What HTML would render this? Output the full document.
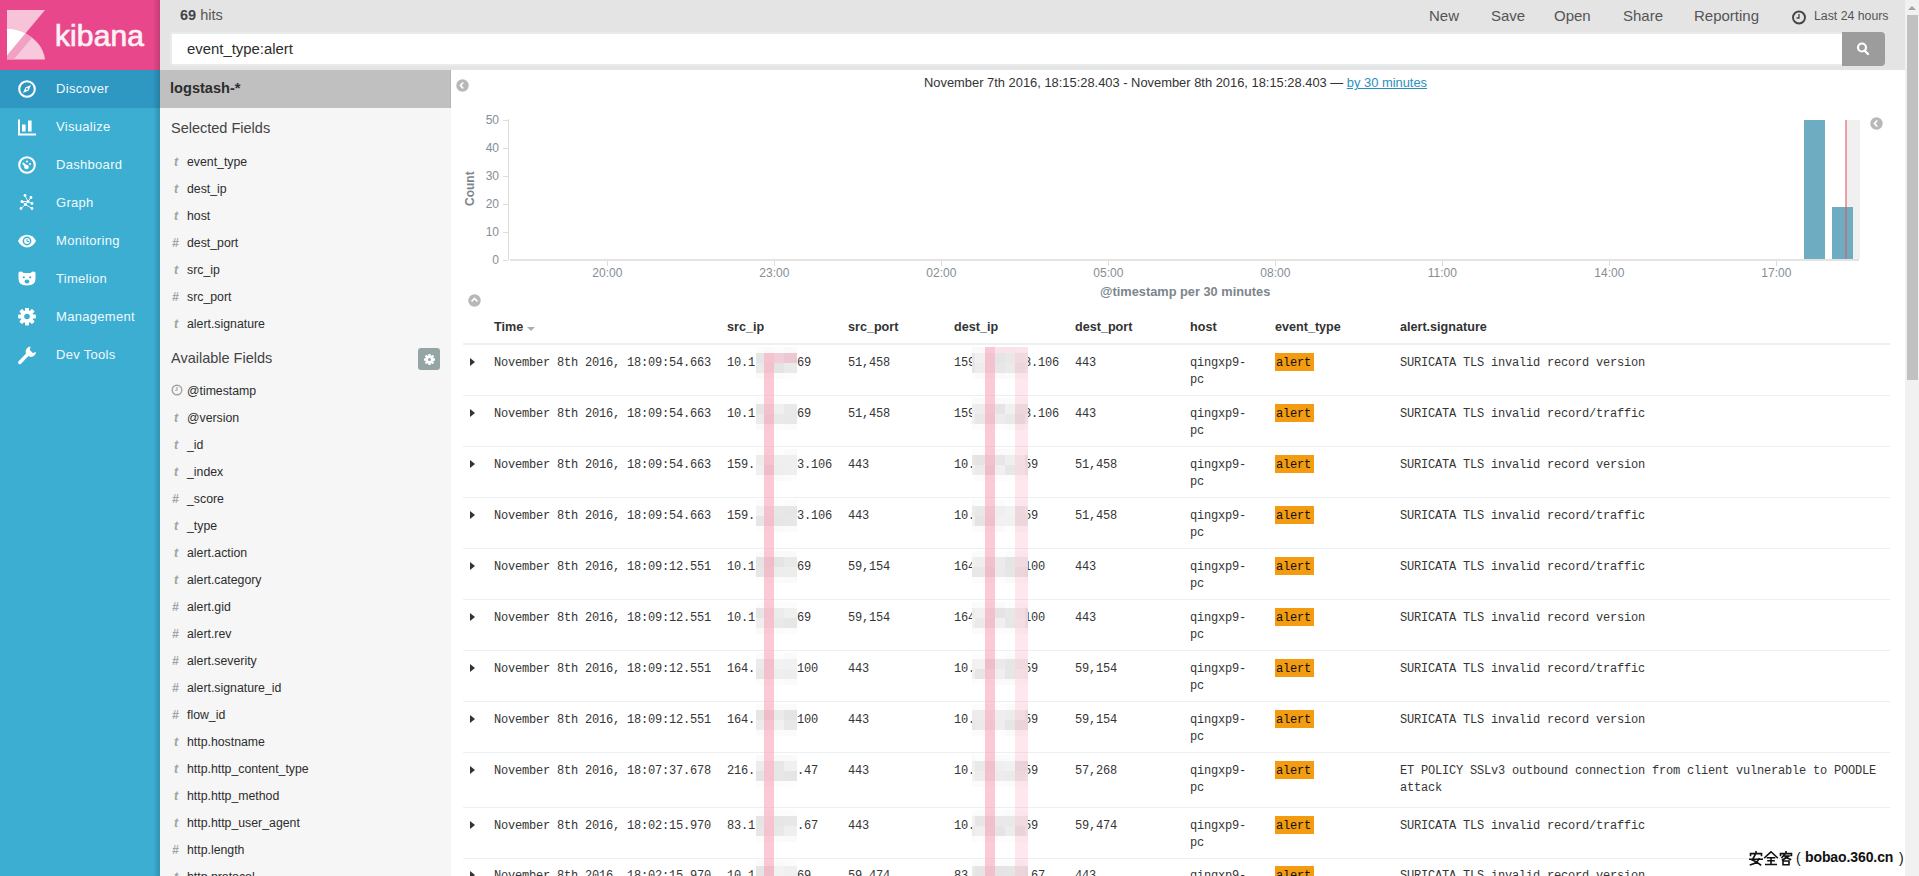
<!DOCTYPE html>
<html><head><meta charset="utf-8"><style>
*{box-sizing:border-box;margin:0;padding:0}
html,body{width:1919px;height:876px;overflow:hidden;background:#fff;font-family:"Liberation Sans",sans-serif;color:#2d2d2d}
.a{position:absolute;white-space:nowrap}
#nav{position:absolute;left:0;top:0;width:160px;height:876px;background:#3caed2}
#logo{position:absolute;left:0;top:0;width:160px;height:70px;background:#e8488b}
.navshadow{position:absolute;left:153px;top:0;width:7px;height:876px;background:linear-gradient(to right,rgba(0,0,0,0),rgba(0,0,0,0.16))}
.ni{position:absolute;left:0;width:160px;height:38px}
.ni.act{background:#2e97c2}
.ni .t{position:absolute;left:56px;top:11px;font-size:13px;line-height:15px;color:#f2fafd;letter-spacing:0.3px}
.ni svg{position:absolute;left:17px;top:10px}
#top{position:absolute;left:160px;top:0;width:1745px;height:70px;background:#e4e4e4}
#side{position:absolute;left:160px;top:70px;width:291px;height:806px;background:#f6f6f6}
#idx{position:absolute;left:160px;top:70px;width:291px;height:38px;background:#c0c0c0}
.fi{position:absolute;left:187px;font-size:12.3px;line-height:14px;color:#2d2d2d;white-space:nowrap}
.ty{position:absolute;font-size:12.5px;line-height:14px;color:#a3a3a3}
#scroll{position:absolute;left:1905px;top:0;width:14px;height:876px;background:#f1f1f1}
.mono{position:absolute;font-family:"Liberation Mono",monospace;font-size:12px;line-height:17px;letter-spacing:-0.2px;color:#353535;white-space:pre}
.th{position:absolute;top:320px;font-size:12.6px;line-height:14px;font-weight:bold;color:#333;white-space:nowrap}
.hl{position:absolute;left:463px;width:1427px;height:1px;background:#ecf0f1}
.badge{position:absolute;background:#f39c12;width:39px;height:18px}
.yl{position:absolute;font-size:12px;line-height:14px;color:#848e96;text-align:right;width:30px;left:469px}
.xl{position:absolute;font-size:12px;line-height:14px;color:#848e96;width:60px;text-align:center;top:266px}
.tick{position:absolute;background:#ddd}
.menu{position:absolute;top:7px;font-size:15px;line-height:18px;color:#555;white-space:nowrap}
.caret{position:absolute;width:0;height:0;border-top:4px solid transparent;border-bottom:4px solid transparent;border-left:5px solid #333}
.mos{position:absolute}
</style></head><body>
<div id="nav">
<div id="logo"><svg class="a" style="left:7px;top:10px" width="39" height="51" viewBox="0 0 39 51"><defs><clipPath id="arc"><path d="M0,18.75 C15,18.75 36,30 38,49.6 L0,49.6 Z"/></clipPath></defs><polygon points="0,0 38,0 0,45.4" fill="#f7c3d8"/><g clip-path="url(#arc)"><rect x="0" y="0" width="39" height="51" fill="#f8c8dc"/><polygon points="0,0 38,0 0,45.4" fill="#ffffff"/><polygon points="38,0 48.3,0 6.75,49.6 0,49.6 0,45.4" fill="#f1a2c4"/></g></svg><div class="a" style="left:55px;top:19px;font-size:30px;line-height:34px;color:#fdf1f6;letter-spacing:0.1px;-webkit-text-stroke:0.7px #fdf1f6">kibana</div></div>
<div class="ni act" style="top:70px"><svg width="20" height="20" viewBox="0 0 20 20"><circle cx="10" cy="9" r="7.8" fill="none" stroke="#fff" stroke-width="2.1"/><path d="M14,5 L11.6,10.6 L6,13 L8.4,7.4 Z" fill="#fff"/><circle cx="10" cy="9" r="1" fill="#2e97c2"/></svg><div class="t">Discover</div></div>
<div class="ni" style="top:108px"><svg width="20" height="20" viewBox="0 0 20 20"><path d="M2,1.5 V16.5 H19" fill="none" stroke="#fff" stroke-width="2"/><rect x="5" y="6.5" width="3.6" height="7" fill="#fff"/><rect x="11" y="2.5" width="3.6" height="11" fill="#fff"/></svg><div class="t">Visualize</div></div>
<div class="ni" style="top:146px"><svg width="20" height="20" viewBox="0 0 20 20"><circle cx="10" cy="9" r="7.8" fill="none" stroke="#fff" stroke-width="2.1"/><circle cx="9.5" cy="11" r="2.3" fill="#fff"/><path d="M9.5,11 L6.3,7.5" stroke="#fff" stroke-width="2" stroke-linecap="round"/><circle cx="10" cy="5.5" r="1.1" fill="#fff"/><circle cx="13" cy="8" r="1.1" fill="#fff"/></svg><div class="t">Dashboard</div></div>
<div class="ni" style="top:184px"><svg width="20" height="20" viewBox="0 0 20 20"><g stroke="#fff" stroke-width="0.9" fill="none"><path d="M8,1.5 L11,7.5 M14,3.5 L11,7.5 M5,7.5 L11,7.5 L15,9.5 M5,7.5 L8.5,10.5 L11,7.5 M8.5,10.5 L4,14.5 M8.5,10.5 L15,14.5"/></g><g fill="#fff"><circle cx="8" cy="1.5" r="1.4"/><circle cx="14" cy="3.5" r="1.4"/><circle cx="5" cy="7.5" r="1.5"/><circle cx="11" cy="7.5" r="1.5"/><circle cx="15" cy="9.5" r="1.4"/><circle cx="8.5" cy="10.5" r="1.5"/><circle cx="4" cy="14.5" r="1.4"/><circle cx="15" cy="14.5" r="1.4"/></g></svg><div class="t">Graph</div></div>
<div class="ni" style="top:222px"><svg width="20" height="20" viewBox="0 0 20 20"><path d="M1,9 C5,0.5 15,0.5 19,9 C15,17.5 5,17.5 1,9 Z" fill="#fff"/><circle cx="10" cy="9" r="4.4" fill="#3caed2"/><circle cx="10" cy="9" r="2.9" fill="#fff"/><path d="M10,7 V9.5 H12" fill="none" stroke="#3caed2" stroke-width="1"/></svg><div class="t">Monitoring</div></div>
<div class="ni" style="top:260px"><svg width="20" height="20" viewBox="0 0 20 20"><path d="M1.5,4.5 Q1,1.5 4,1.6 Q5.5,1.8 6.5,3 H13.5 Q14.5,1.8 16,1.6 Q19,1.5 18.5,4.5 L18.5,8.5 Q18.5,15.5 10,15.5 Q1.5,15.5 1.5,8.5 Z" fill="#fff"/><circle cx="6.8" cy="7.3" r="1.1" fill="#3caed2"/><circle cx="13.2" cy="7.3" r="1.1" fill="#3caed2"/><ellipse cx="10" cy="11.5" rx="2.4" ry="2" fill="#3caed2"/></svg><div class="t">Timelion</div></div>
<div class="ni" style="top:298px"><svg width="20" height="20" viewBox="0 0 20 20"><g fill="#fff"><circle cx="10" cy="8.5" r="6.3"/><rect x="8" y="-0.5" width="4" height="18" rx="1"/><rect x="8" y="-0.5" width="4" height="18" rx="1" transform="rotate(45 10 8.5)"/><rect x="8" y="-0.5" width="4" height="18" rx="1" transform="rotate(90 10 8.5)"/><rect x="8" y="-0.5" width="4" height="18" rx="1" transform="rotate(135 10 8.5)"/></g><circle cx="10" cy="8.5" r="2.8" fill="#3caed2"/></svg><div class="t">Management</div></div>
<div class="ni" style="top:336px"><svg width="20" height="20" viewBox="0 0 20 20"><path d="M2.8,16.5 L10.5,8.5" stroke="#fff" stroke-width="3.4" stroke-linecap="round"/><path d="M13.5,0.5 A5.2,5.2 0 1 0 19,6 L15.8,7 L12.8,4 Z" fill="#fff"/></svg><div class="t">Dev Tools</div></div>
</div><div class="navshadow"></div>
<div id="top"></div>
<div class="a" style="left:180px;top:7px;font-size:14.5px;line-height:16px;color:#555"><b style="color:#444">69</b> hits</div>
<div class="menu" style="left:1429px">New</div>
<div class="menu" style="left:1491px">Save</div>
<div class="menu" style="left:1554px">Open</div>
<div class="menu" style="left:1623px">Share</div>
<div class="menu" style="left:1694px">Reporting</div>
<svg class="a" style="left:1791px;top:10px" width="16" height="16" viewBox="0 0 16 16"><circle cx="8" cy="7.5" r="6" fill="none" stroke="#444" stroke-width="1.9"/><path d="M8,4 V8 H5.5" fill="none" stroke="#444" stroke-width="1.3"/></svg>
<div class="a" style="left:1814px;top:9px;font-size:12.3px;line-height:15px;color:#555">Last 24 hours</div>
<div class="a" style="left:170px;top:32px;width:1674px;height:34px;background:#e9eced;border-radius:3px 0 0 3px"></div>
<div class="a" style="left:172px;top:34px;width:1670px;height:30px;background:#fff"></div>
<div class="a" style="left:187px;top:41px;font-size:14.9px;line-height:17px;color:#2d2d2d">event_type:alert</div>
<div class="a" style="left:1842px;top:32px;width:43px;height:34px;background:#9c9c9c;border-radius:0 4px 4px 0"></div>
<svg class="a" style="left:1855px;top:41px" width="16" height="16" viewBox="0 0 16 16"><circle cx="7" cy="6.5" r="4" fill="none" stroke="#fff" stroke-width="2.2"/><path d="M9.5,9.5 L13,13" stroke="#fff" stroke-width="2.4" stroke-linecap="round"/></svg>
<div id="side"></div><div id="idx"></div>
<div class="a" style="left:450px;top:70px;width:1px;height:38px;background:#b5b5b5"></div>
<div class="a" style="left:170px;top:80px;font-size:14.6px;line-height:17px;font-weight:bold;color:#2d2d2d">logstash-*</div>
<div class="a" style="left:171px;top:120px;font-size:14.5px;line-height:17px;color:#444">Selected Fields</div>
<div class="ty" style="left:174px;top:155px;font-style:italic;font-weight:bold;font-size:12.5px">t</div>
<div class="fi" style="top:155px">event_type</div>
<div class="ty" style="left:174px;top:182px;font-style:italic;font-weight:bold;font-size:12.5px">t</div>
<div class="fi" style="top:182px">dest_ip</div>
<div class="ty" style="left:174px;top:209px;font-style:italic;font-weight:bold;font-size:12.5px">t</div>
<div class="fi" style="top:209px">host</div>
<div class="ty" style="left:172px;top:236px;font-style:italic;font-weight:bold;font-size:12px">#</div>
<div class="fi" style="top:236px">dest_port</div>
<div class="ty" style="left:174px;top:263px;font-style:italic;font-weight:bold;font-size:12.5px">t</div>
<div class="fi" style="top:263px">src_ip</div>
<div class="ty" style="left:172px;top:290px;font-style:italic;font-weight:bold;font-size:12px">#</div>
<div class="fi" style="top:290px">src_port</div>
<div class="ty" style="left:174px;top:317px;font-style:italic;font-weight:bold;font-size:12.5px">t</div>
<div class="fi" style="top:317px">alert.signature</div>
<div class="a" style="left:171px;top:350px;font-size:14.5px;line-height:17px;color:#444">Available Fields</div>
<div class="a" style="left:418px;top:348px;width:22px;height:22px;background:#95a5a6;border-radius:3px"></div>
<svg class="a" style="left:423px;top:353px" width="13" height="13" viewBox="0 0 13 13"><g fill="#fff"><circle cx="6.5" cy="6.5" r="4"/><rect x="5.3" y="1" width="2.4" height="11" rx=".5"/><rect x="5.3" y="1" width="2.4" height="11" rx=".5" transform="rotate(45 6.5 6.5)"/><rect x="5.3" y="1" width="2.4" height="11" rx=".5" transform="rotate(90 6.5 6.5)"/><rect x="5.3" y="1" width="2.4" height="11" rx=".5" transform="rotate(135 6.5 6.5)"/></g><circle cx="6.5" cy="6.5" r="1.5" fill="#95a5a6"/></svg>
<svg class="a" style="left:171px;top:384px" width="12" height="12" viewBox="0 0 12 12"><circle cx="6" cy="6" r="4.8" fill="none" stroke="#a3a3a3" stroke-width="1.4"/><path d="M6,3 V6.3 H4" fill="none" stroke="#a3a3a3" stroke-width="1.1"/></svg>
<div class="fi" style="top:384px">@timestamp</div>
<div class="ty" style="left:174px;top:411px;font-style:italic;font-weight:bold;font-size:12.5px">t</div>
<div class="fi" style="top:411px">@version</div>
<div class="ty" style="left:174px;top:438px;font-style:italic;font-weight:bold;font-size:12.5px">t</div>
<div class="fi" style="top:438px">_id</div>
<div class="ty" style="left:174px;top:465px;font-style:italic;font-weight:bold;font-size:12.5px">t</div>
<div class="fi" style="top:465px">_index</div>
<div class="ty" style="left:172px;top:492px;font-style:italic;font-weight:bold;font-size:12px">#</div>
<div class="fi" style="top:492px">_score</div>
<div class="ty" style="left:174px;top:519px;font-style:italic;font-weight:bold;font-size:12.5px">t</div>
<div class="fi" style="top:519px">_type</div>
<div class="ty" style="left:174px;top:546px;font-style:italic;font-weight:bold;font-size:12.5px">t</div>
<div class="fi" style="top:546px">alert.action</div>
<div class="ty" style="left:174px;top:573px;font-style:italic;font-weight:bold;font-size:12.5px">t</div>
<div class="fi" style="top:573px">alert.category</div>
<div class="ty" style="left:172px;top:600px;font-style:italic;font-weight:bold;font-size:12px">#</div>
<div class="fi" style="top:600px">alert.gid</div>
<div class="ty" style="left:172px;top:627px;font-style:italic;font-weight:bold;font-size:12px">#</div>
<div class="fi" style="top:627px">alert.rev</div>
<div class="ty" style="left:172px;top:654px;font-style:italic;font-weight:bold;font-size:12px">#</div>
<div class="fi" style="top:654px">alert.severity</div>
<div class="ty" style="left:172px;top:681px;font-style:italic;font-weight:bold;font-size:12px">#</div>
<div class="fi" style="top:681px">alert.signature_id</div>
<div class="ty" style="left:172px;top:708px;font-style:italic;font-weight:bold;font-size:12px">#</div>
<div class="fi" style="top:708px">flow_id</div>
<div class="ty" style="left:174px;top:735px;font-style:italic;font-weight:bold;font-size:12.5px">t</div>
<div class="fi" style="top:735px">http.hostname</div>
<div class="ty" style="left:174px;top:762px;font-style:italic;font-weight:bold;font-size:12.5px">t</div>
<div class="fi" style="top:762px">http.http_content_type</div>
<div class="ty" style="left:174px;top:789px;font-style:italic;font-weight:bold;font-size:12.5px">t</div>
<div class="fi" style="top:789px">http.http_method</div>
<div class="ty" style="left:174px;top:816px;font-style:italic;font-weight:bold;font-size:12.5px">t</div>
<div class="fi" style="top:816px">http.http_user_agent</div>
<div class="ty" style="left:172px;top:843px;font-style:italic;font-weight:bold;font-size:12px">#</div>
<div class="fi" style="top:843px">http.length</div>
<div class="ty" style="left:174px;top:870px;font-style:italic;font-weight:bold;font-size:12.5px">t</div>
<div class="fi" style="top:870px">http.protocol</div>
<div class="a" style="left:924px;top:75px;font-size:12.9px;line-height:16px;color:#333">November 7th 2016, 18:15:28.403 - November 8th 2016, 18:15:28.403 — <span style="color:#2b8fbd;text-decoration:underline">by 30 minutes</span></div>
<svg class="a" style="left:455.5px;top:78.5px" width="13" height="13" viewBox="0 0 13 13"><circle cx="6.5" cy="6.5" r="6.2" fill="#b8b8b8"/><path d="M7.2,3.5 L4.5,6.5 L7.2,9.5" fill="none" stroke="#fff" stroke-width="1.7"/></svg>
<svg class="a" style="left:1869.5px;top:116.5px" width="13" height="13" viewBox="0 0 13 13"><circle cx="6.5" cy="6.5" r="6.2" fill="#b8b8b8"/><path d="M7.2,3.5 L4.5,6.5 L7.2,9.5" fill="none" stroke="#fff" stroke-width="1.7"/></svg>
<svg class="a" style="left:467.5px;top:293.5px" width="13" height="13" viewBox="0 0 13 13"><circle cx="6.5" cy="6.5" r="6.2" fill="#b8b8b8"/><path d="M3.5,7.5 L6.5,4.5 L9.5,7.5" fill="none" stroke="#fff" stroke-width="1.7"/></svg>
<div class="yl" style="top:113.0px">50</div>
<div class="tick" style="left:503px;top:119.5px;width:5px;height:1px"></div>
<div class="yl" style="top:141.1px">40</div>
<div class="tick" style="left:503px;top:147.6px;width:5px;height:1px"></div>
<div class="yl" style="top:169.1px">30</div>
<div class="tick" style="left:503px;top:175.6px;width:5px;height:1px"></div>
<div class="yl" style="top:197.2px">20</div>
<div class="tick" style="left:503px;top:203.7px;width:5px;height:1px"></div>
<div class="yl" style="top:225.2px">10</div>
<div class="tick" style="left:503px;top:231.7px;width:5px;height:1px"></div>
<div class="yl" style="top:253.2px">0</div>
<div class="tick" style="left:503px;top:259.8px;width:5px;height:1px"></div>
<div class="tick" style="left:508px;top:119px;width:1px;height:141px"></div>
<div class="tick" style="left:510px;top:259px;width:1349px;height:2px;background:#e3e3e3"></div>
<div class="a" style="left:463px;top:182px;font-size:12px;line-height:14px;font-weight:bold;color:#7b858d;transform:rotate(-90deg);transform-origin:0 0;top:206px">Count</div>
<div class="tick" style="left:606.8px;top:261px;width:1px;height:5px"></div>
<div class="xl" style="left:577.3px">20:00</div>
<div class="tick" style="left:773.8px;top:261px;width:1px;height:5px"></div>
<div class="xl" style="left:744.3px">23:00</div>
<div class="tick" style="left:940.8px;top:261px;width:1px;height:5px"></div>
<div class="xl" style="left:911.3px">02:00</div>
<div class="tick" style="left:1107.8px;top:261px;width:1px;height:5px"></div>
<div class="xl" style="left:1078.3px">05:00</div>
<div class="tick" style="left:1274.8px;top:261px;width:1px;height:5px"></div>
<div class="xl" style="left:1245.3px">08:00</div>
<div class="tick" style="left:1441.8px;top:261px;width:1px;height:5px"></div>
<div class="xl" style="left:1412.3px">11:00</div>
<div class="tick" style="left:1608.8px;top:261px;width:1px;height:5px"></div>
<div class="xl" style="left:1579.3px">14:00</div>
<div class="tick" style="left:1775.8px;top:261px;width:1px;height:5px"></div>
<div class="xl" style="left:1746.3px">17:00</div>
<div class="a" style="left:1100px;top:284px;font-size:12.8px;line-height:15px;font-weight:bold;color:#7b858d">@timestamp per 30 minutes</div>
<div class="a" style="left:1846px;top:120px;width:14px;height:139px;background:#f0f0f0"></div>
<div class="a" style="left:1804px;top:120px;width:21px;height:139px;background:#6eadc1"></div>
<div class="a" style="left:1832px;top:207px;width:21px;height:52px;background:#6eadc1"></div>
<div class="a" style="left:1845px;top:120px;width:1.5px;height:139px;background:rgba(225,90,100,0.55)"></div>
<div class="th" style="left:494px">Time</div>
<div class="th" style="left:727px">src_ip</div>
<div class="th" style="left:848px">src_port</div>
<div class="th" style="left:954px">dest_ip</div>
<div class="th" style="left:1075px">dest_port</div>
<div class="th" style="left:1190px">host</div>
<div class="th" style="left:1275px">event_type</div>
<div class="th" style="left:1400px">alert.signature</div>
<div class="a" style="left:527px;top:327px;width:0;height:0;border-left:4px solid transparent;border-right:4px solid transparent;border-top:4px solid #a9b0b5"></div>
<div class="hl" style="top:343px;height:2px"></div>
<div class="hl" style="top:395px"></div>
<div class="hl" style="top:446px"></div>
<div class="hl" style="top:497px"></div>
<div class="hl" style="top:548px"></div>
<div class="hl" style="top:599px"></div>
<div class="hl" style="top:650px"></div>
<div class="hl" style="top:701px"></div>
<div class="hl" style="top:752px"></div>
<div class="hl" style="top:807px"></div>
<div class="hl" style="top:858px"></div>
<div class="caret" style="left:470px;top:358px"></div>
<div class="mono" style="left:494px;top:355px">November 8th 2016, 18:09:54.663</div>
<div class="mono" style="left:727px;top:355px">10.1</div>
<div class="mono" style="left:797px;top:355px">69</div>
<div class="mono" style="left:848px;top:355px">51,458</div>
<div class="mono" style="left:954px;top:355px">159</div>
<div class="mono" style="left:1024px;top:355px">3.106</div>
<div class="mono" style="left:1075px;top:355px">443</div>
<div class="mono" style="left:1190px;top:355px">qingxp9-
pc</div>
<div class="badge" style="left:1275px;top:353px"></div>
<div class="mono" style="left:1276px;top:355px;color:#111">alert</div>
<div class="mono" style="left:1400px;top:355px">SURICATA TLS invalid record version</div>
<div class="a" style="left:756px;top:347px;width:8px;height:6px;background:rgb(252,252,252)"></div>
<div class="a" style="left:756px;top:353px;width:8px;height:10px;background:rgb(230,230,230)"></div>
<div class="a" style="left:756px;top:363px;width:8px;height:10px;background:rgb(234,234,234)"></div>
<div class="a" style="left:756px;top:373px;width:8px;height:6px;background:rgb(250,250,250)"></div>
<div class="a" style="left:764px;top:347px;width:10px;height:6px;background:rgb(250,250,250)"></div>
<div class="a" style="left:764px;top:353px;width:10px;height:10px;background:rgb(241,241,241)"></div>
<div class="a" style="left:764px;top:363px;width:10px;height:10px;background:rgb(236,236,236)"></div>
<div class="a" style="left:764px;top:373px;width:10px;height:6px;background:rgb(250,250,250)"></div>
<div class="a" style="left:774px;top:347px;width:10px;height:6px;background:rgb(252,252,252)"></div>
<div class="a" style="left:774px;top:353px;width:10px;height:10px;background:rgb(237,237,237)"></div>
<div class="a" style="left:774px;top:363px;width:10px;height:10px;background:rgb(228,228,228)"></div>
<div class="a" style="left:774px;top:373px;width:10px;height:6px;background:rgb(251,251,251)"></div>
<div class="a" style="left:784px;top:347px;width:13px;height:6px;background:rgb(250,250,250)"></div>
<div class="a" style="left:784px;top:353px;width:13px;height:10px;background:rgb(229,229,229)"></div>
<div class="a" style="left:784px;top:363px;width:13px;height:10px;background:rgb(234,234,234)"></div>
<div class="a" style="left:784px;top:373px;width:13px;height:6px;background:rgb(253,253,253)"></div>
<div class="a" style="left:972px;top:347px;width:3px;height:6px;background:rgb(250,250,250)"></div>
<div class="a" style="left:972px;top:353px;width:3px;height:10px;background:rgb(231,231,231)"></div>
<div class="a" style="left:972px;top:363px;width:3px;height:10px;background:rgb(229,229,229)"></div>
<div class="a" style="left:972px;top:373px;width:3px;height:6px;background:rgb(253,253,253)"></div>
<div class="a" style="left:975px;top:347px;width:10px;height:6px;background:rgb(250,250,250)"></div>
<div class="a" style="left:975px;top:353px;width:10px;height:10px;background:rgb(241,241,241)"></div>
<div class="a" style="left:975px;top:363px;width:10px;height:10px;background:rgb(237,237,237)"></div>
<div class="a" style="left:975px;top:373px;width:10px;height:6px;background:rgb(250,250,250)"></div>
<div class="a" style="left:985px;top:347px;width:10px;height:6px;background:rgb(251,251,251)"></div>
<div class="a" style="left:985px;top:353px;width:10px;height:10px;background:rgb(238,238,238)"></div>
<div class="a" style="left:985px;top:363px;width:10px;height:10px;background:rgb(238,238,238)"></div>
<div class="a" style="left:985px;top:373px;width:10px;height:6px;background:rgb(250,250,250)"></div>
<div class="a" style="left:995px;top:347px;width:10px;height:6px;background:rgb(253,253,253)"></div>
<div class="a" style="left:995px;top:353px;width:10px;height:10px;background:rgb(228,228,228)"></div>
<div class="a" style="left:995px;top:363px;width:10px;height:10px;background:rgb(231,231,231)"></div>
<div class="a" style="left:995px;top:373px;width:10px;height:6px;background:rgb(250,250,250)"></div>
<div class="a" style="left:1005px;top:347px;width:10px;height:6px;background:rgb(251,251,251)"></div>
<div class="a" style="left:1005px;top:353px;width:10px;height:10px;background:rgb(232,232,232)"></div>
<div class="a" style="left:1005px;top:363px;width:10px;height:10px;background:rgb(234,234,234)"></div>
<div class="a" style="left:1005px;top:373px;width:10px;height:6px;background:rgb(251,251,251)"></div>
<div class="a" style="left:1015px;top:347px;width:10px;height:6px;background:rgb(250,250,250)"></div>
<div class="a" style="left:1015px;top:353px;width:10px;height:10px;background:rgb(237,237,237)"></div>
<div class="a" style="left:1015px;top:363px;width:10px;height:10px;background:rgb(232,232,232)"></div>
<div class="a" style="left:1015px;top:373px;width:10px;height:6px;background:rgb(251,251,251)"></div>
<div class="a" style="left:1025px;top:347px;width:3px;height:6px;background:rgb(250,250,250)"></div>
<div class="a" style="left:1025px;top:353px;width:3px;height:10px;background:rgb(237,237,237)"></div>
<div class="a" style="left:1025px;top:363px;width:3px;height:10px;background:rgb(237,237,237)"></div>
<div class="a" style="left:1025px;top:373px;width:3px;height:6px;background:rgb(251,251,251)"></div>
<div class="caret" style="left:470px;top:409px"></div>
<div class="mono" style="left:494px;top:406px">November 8th 2016, 18:09:54.663</div>
<div class="mono" style="left:727px;top:406px">10.1</div>
<div class="mono" style="left:797px;top:406px">69</div>
<div class="mono" style="left:848px;top:406px">51,458</div>
<div class="mono" style="left:954px;top:406px">159</div>
<div class="mono" style="left:1024px;top:406px">3.106</div>
<div class="mono" style="left:1075px;top:406px">443</div>
<div class="mono" style="left:1190px;top:406px">qingxp9-
pc</div>
<div class="badge" style="left:1275px;top:404px"></div>
<div class="mono" style="left:1276px;top:406px;color:#111">alert</div>
<div class="mono" style="left:1400px;top:406px">SURICATA TLS invalid record/traffic</div>
<div class="a" style="left:756px;top:398px;width:8px;height:6px;background:rgb(252,252,252)"></div>
<div class="a" style="left:756px;top:404px;width:8px;height:10px;background:rgb(229,229,229)"></div>
<div class="a" style="left:756px;top:414px;width:8px;height:10px;background:rgb(236,236,236)"></div>
<div class="a" style="left:756px;top:424px;width:8px;height:6px;background:rgb(250,250,250)"></div>
<div class="a" style="left:764px;top:398px;width:10px;height:6px;background:rgb(250,250,250)"></div>
<div class="a" style="left:764px;top:404px;width:10px;height:10px;background:rgb(237,237,237)"></div>
<div class="a" style="left:764px;top:414px;width:10px;height:10px;background:rgb(231,231,231)"></div>
<div class="a" style="left:764px;top:424px;width:10px;height:6px;background:rgb(253,253,253)"></div>
<div class="a" style="left:774px;top:398px;width:10px;height:6px;background:rgb(253,253,253)"></div>
<div class="a" style="left:774px;top:404px;width:10px;height:10px;background:rgb(240,240,240)"></div>
<div class="a" style="left:774px;top:414px;width:10px;height:10px;background:rgb(233,233,233)"></div>
<div class="a" style="left:774px;top:424px;width:10px;height:6px;background:rgb(253,253,253)"></div>
<div class="a" style="left:784px;top:398px;width:13px;height:6px;background:rgb(253,253,253)"></div>
<div class="a" style="left:784px;top:404px;width:13px;height:10px;background:rgb(233,233,233)"></div>
<div class="a" style="left:784px;top:414px;width:13px;height:10px;background:rgb(232,232,232)"></div>
<div class="a" style="left:784px;top:424px;width:13px;height:6px;background:rgb(251,251,251)"></div>
<div class="a" style="left:972px;top:398px;width:3px;height:6px;background:rgb(251,251,251)"></div>
<div class="a" style="left:972px;top:404px;width:3px;height:10px;background:rgb(239,239,239)"></div>
<div class="a" style="left:972px;top:414px;width:3px;height:10px;background:rgb(240,240,240)"></div>
<div class="a" style="left:972px;top:424px;width:3px;height:6px;background:rgb(251,251,251)"></div>
<div class="a" style="left:975px;top:398px;width:10px;height:6px;background:rgb(250,250,250)"></div>
<div class="a" style="left:975px;top:404px;width:10px;height:10px;background:rgb(237,237,237)"></div>
<div class="a" style="left:975px;top:414px;width:10px;height:10px;background:rgb(232,232,232)"></div>
<div class="a" style="left:975px;top:424px;width:10px;height:6px;background:rgb(253,253,253)"></div>
<div class="a" style="left:985px;top:398px;width:10px;height:6px;background:rgb(252,252,252)"></div>
<div class="a" style="left:985px;top:404px;width:10px;height:10px;background:rgb(239,239,239)"></div>
<div class="a" style="left:985px;top:414px;width:10px;height:10px;background:rgb(235,235,235)"></div>
<div class="a" style="left:985px;top:424px;width:10px;height:6px;background:rgb(252,252,252)"></div>
<div class="a" style="left:995px;top:398px;width:10px;height:6px;background:rgb(250,250,250)"></div>
<div class="a" style="left:995px;top:404px;width:10px;height:10px;background:rgb(229,229,229)"></div>
<div class="a" style="left:995px;top:414px;width:10px;height:10px;background:rgb(236,236,236)"></div>
<div class="a" style="left:995px;top:424px;width:10px;height:6px;background:rgb(253,253,253)"></div>
<div class="a" style="left:1005px;top:398px;width:10px;height:6px;background:rgb(251,251,251)"></div>
<div class="a" style="left:1005px;top:404px;width:10px;height:10px;background:rgb(240,240,240)"></div>
<div class="a" style="left:1005px;top:414px;width:10px;height:10px;background:rgb(233,233,233)"></div>
<div class="a" style="left:1005px;top:424px;width:10px;height:6px;background:rgb(251,251,251)"></div>
<div class="a" style="left:1015px;top:398px;width:10px;height:6px;background:rgb(253,253,253)"></div>
<div class="a" style="left:1015px;top:404px;width:10px;height:10px;background:rgb(234,234,234)"></div>
<div class="a" style="left:1015px;top:414px;width:10px;height:10px;background:rgb(228,228,228)"></div>
<div class="a" style="left:1015px;top:424px;width:10px;height:6px;background:rgb(250,250,250)"></div>
<div class="a" style="left:1025px;top:398px;width:3px;height:6px;background:rgb(252,252,252)"></div>
<div class="a" style="left:1025px;top:404px;width:3px;height:10px;background:rgb(233,233,233)"></div>
<div class="a" style="left:1025px;top:414px;width:3px;height:10px;background:rgb(239,239,239)"></div>
<div class="a" style="left:1025px;top:424px;width:3px;height:6px;background:rgb(252,252,252)"></div>
<div class="caret" style="left:470px;top:460px"></div>
<div class="mono" style="left:494px;top:457px">November 8th 2016, 18:09:54.663</div>
<div class="mono" style="left:727px;top:457px">159.</div>
<div class="mono" style="left:797px;top:457px">3.106</div>
<div class="mono" style="left:848px;top:457px">443</div>
<div class="mono" style="left:954px;top:457px">10.</div>
<div class="mono" style="left:1024px;top:457px">59</div>
<div class="mono" style="left:1075px;top:457px">51,458</div>
<div class="mono" style="left:1190px;top:457px">qingxp9-
pc</div>
<div class="badge" style="left:1275px;top:455px"></div>
<div class="mono" style="left:1276px;top:457px;color:#111">alert</div>
<div class="mono" style="left:1400px;top:457px">SURICATA TLS invalid record version</div>
<div class="a" style="left:756px;top:449px;width:8px;height:6px;background:rgb(253,253,253)"></div>
<div class="a" style="left:756px;top:455px;width:8px;height:10px;background:rgb(237,237,237)"></div>
<div class="a" style="left:756px;top:465px;width:8px;height:10px;background:rgb(240,240,240)"></div>
<div class="a" style="left:756px;top:475px;width:8px;height:6px;background:rgb(253,253,253)"></div>
<div class="a" style="left:764px;top:449px;width:10px;height:6px;background:rgb(250,250,250)"></div>
<div class="a" style="left:764px;top:455px;width:10px;height:10px;background:rgb(241,241,241)"></div>
<div class="a" style="left:764px;top:465px;width:10px;height:10px;background:rgb(229,229,229)"></div>
<div class="a" style="left:764px;top:475px;width:10px;height:6px;background:rgb(252,252,252)"></div>
<div class="a" style="left:774px;top:449px;width:10px;height:6px;background:rgb(253,253,253)"></div>
<div class="a" style="left:774px;top:455px;width:10px;height:10px;background:rgb(239,239,239)"></div>
<div class="a" style="left:774px;top:465px;width:10px;height:10px;background:rgb(238,238,238)"></div>
<div class="a" style="left:774px;top:475px;width:10px;height:6px;background:rgb(250,250,250)"></div>
<div class="a" style="left:784px;top:449px;width:13px;height:6px;background:rgb(250,250,250)"></div>
<div class="a" style="left:784px;top:455px;width:13px;height:10px;background:rgb(239,239,239)"></div>
<div class="a" style="left:784px;top:465px;width:13px;height:10px;background:rgb(239,239,239)"></div>
<div class="a" style="left:784px;top:475px;width:13px;height:6px;background:rgb(252,252,252)"></div>
<div class="a" style="left:972px;top:449px;width:3px;height:6px;background:rgb(253,253,253)"></div>
<div class="a" style="left:972px;top:455px;width:3px;height:10px;background:rgb(232,232,232)"></div>
<div class="a" style="left:972px;top:465px;width:3px;height:10px;background:rgb(239,239,239)"></div>
<div class="a" style="left:972px;top:475px;width:3px;height:6px;background:rgb(253,253,253)"></div>
<div class="a" style="left:975px;top:449px;width:10px;height:6px;background:rgb(252,252,252)"></div>
<div class="a" style="left:975px;top:455px;width:10px;height:10px;background:rgb(228,228,228)"></div>
<div class="a" style="left:975px;top:465px;width:10px;height:10px;background:rgb(235,235,235)"></div>
<div class="a" style="left:975px;top:475px;width:10px;height:6px;background:rgb(252,252,252)"></div>
<div class="a" style="left:985px;top:449px;width:10px;height:6px;background:rgb(251,251,251)"></div>
<div class="a" style="left:985px;top:455px;width:10px;height:10px;background:rgb(237,237,237)"></div>
<div class="a" style="left:985px;top:465px;width:10px;height:10px;background:rgb(229,229,229)"></div>
<div class="a" style="left:985px;top:475px;width:10px;height:6px;background:rgb(253,253,253)"></div>
<div class="a" style="left:995px;top:449px;width:10px;height:6px;background:rgb(250,250,250)"></div>
<div class="a" style="left:995px;top:455px;width:10px;height:10px;background:rgb(231,231,231)"></div>
<div class="a" style="left:995px;top:465px;width:10px;height:10px;background:rgb(240,240,240)"></div>
<div class="a" style="left:995px;top:475px;width:10px;height:6px;background:rgb(252,252,252)"></div>
<div class="a" style="left:1005px;top:449px;width:10px;height:6px;background:rgb(251,251,251)"></div>
<div class="a" style="left:1005px;top:455px;width:10px;height:10px;background:rgb(239,239,239)"></div>
<div class="a" style="left:1005px;top:465px;width:10px;height:10px;background:rgb(231,231,231)"></div>
<div class="a" style="left:1005px;top:475px;width:10px;height:6px;background:rgb(253,253,253)"></div>
<div class="a" style="left:1015px;top:449px;width:10px;height:6px;background:rgb(253,253,253)"></div>
<div class="a" style="left:1015px;top:455px;width:10px;height:10px;background:rgb(242,242,242)"></div>
<div class="a" style="left:1015px;top:465px;width:10px;height:10px;background:rgb(241,241,241)"></div>
<div class="a" style="left:1015px;top:475px;width:10px;height:6px;background:rgb(253,253,253)"></div>
<div class="a" style="left:1025px;top:449px;width:3px;height:6px;background:rgb(250,250,250)"></div>
<div class="a" style="left:1025px;top:455px;width:3px;height:10px;background:rgb(230,230,230)"></div>
<div class="a" style="left:1025px;top:465px;width:3px;height:10px;background:rgb(235,235,235)"></div>
<div class="a" style="left:1025px;top:475px;width:3px;height:6px;background:rgb(253,253,253)"></div>
<div class="caret" style="left:470px;top:511px"></div>
<div class="mono" style="left:494px;top:508px">November 8th 2016, 18:09:54.663</div>
<div class="mono" style="left:727px;top:508px">159.</div>
<div class="mono" style="left:797px;top:508px">3.106</div>
<div class="mono" style="left:848px;top:508px">443</div>
<div class="mono" style="left:954px;top:508px">10.</div>
<div class="mono" style="left:1024px;top:508px">59</div>
<div class="mono" style="left:1075px;top:508px">51,458</div>
<div class="mono" style="left:1190px;top:508px">qingxp9-
pc</div>
<div class="badge" style="left:1275px;top:506px"></div>
<div class="mono" style="left:1276px;top:508px;color:#111">alert</div>
<div class="mono" style="left:1400px;top:508px">SURICATA TLS invalid record/traffic</div>
<div class="a" style="left:756px;top:500px;width:8px;height:6px;background:rgb(252,252,252)"></div>
<div class="a" style="left:756px;top:506px;width:8px;height:10px;background:rgb(242,242,242)"></div>
<div class="a" style="left:756px;top:516px;width:8px;height:10px;background:rgb(230,230,230)"></div>
<div class="a" style="left:756px;top:526px;width:8px;height:6px;background:rgb(253,253,253)"></div>
<div class="a" style="left:764px;top:500px;width:10px;height:6px;background:rgb(252,252,252)"></div>
<div class="a" style="left:764px;top:506px;width:10px;height:10px;background:rgb(239,239,239)"></div>
<div class="a" style="left:764px;top:516px;width:10px;height:10px;background:rgb(234,234,234)"></div>
<div class="a" style="left:764px;top:526px;width:10px;height:6px;background:rgb(252,252,252)"></div>
<div class="a" style="left:774px;top:500px;width:10px;height:6px;background:rgb(253,253,253)"></div>
<div class="a" style="left:774px;top:506px;width:10px;height:10px;background:rgb(231,231,231)"></div>
<div class="a" style="left:774px;top:516px;width:10px;height:10px;background:rgb(230,230,230)"></div>
<div class="a" style="left:774px;top:526px;width:10px;height:6px;background:rgb(250,250,250)"></div>
<div class="a" style="left:784px;top:500px;width:13px;height:6px;background:rgb(251,251,251)"></div>
<div class="a" style="left:784px;top:506px;width:13px;height:10px;background:rgb(230,230,230)"></div>
<div class="a" style="left:784px;top:516px;width:13px;height:10px;background:rgb(231,231,231)"></div>
<div class="a" style="left:784px;top:526px;width:13px;height:6px;background:rgb(251,251,251)"></div>
<div class="a" style="left:972px;top:500px;width:3px;height:6px;background:rgb(250,250,250)"></div>
<div class="a" style="left:972px;top:506px;width:3px;height:10px;background:rgb(235,235,235)"></div>
<div class="a" style="left:972px;top:516px;width:3px;height:10px;background:rgb(241,241,241)"></div>
<div class="a" style="left:972px;top:526px;width:3px;height:6px;background:rgb(251,251,251)"></div>
<div class="a" style="left:975px;top:500px;width:10px;height:6px;background:rgb(252,252,252)"></div>
<div class="a" style="left:975px;top:506px;width:10px;height:10px;background:rgb(232,232,232)"></div>
<div class="a" style="left:975px;top:516px;width:10px;height:10px;background:rgb(228,228,228)"></div>
<div class="a" style="left:975px;top:526px;width:10px;height:6px;background:rgb(251,251,251)"></div>
<div class="a" style="left:985px;top:500px;width:10px;height:6px;background:rgb(253,253,253)"></div>
<div class="a" style="left:985px;top:506px;width:10px;height:10px;background:rgb(236,236,236)"></div>
<div class="a" style="left:985px;top:516px;width:10px;height:10px;background:rgb(233,233,233)"></div>
<div class="a" style="left:985px;top:526px;width:10px;height:6px;background:rgb(252,252,252)"></div>
<div class="a" style="left:995px;top:500px;width:10px;height:6px;background:rgb(251,251,251)"></div>
<div class="a" style="left:995px;top:506px;width:10px;height:10px;background:rgb(239,239,239)"></div>
<div class="a" style="left:995px;top:516px;width:10px;height:10px;background:rgb(241,241,241)"></div>
<div class="a" style="left:995px;top:526px;width:10px;height:6px;background:rgb(250,250,250)"></div>
<div class="a" style="left:1005px;top:500px;width:10px;height:6px;background:rgb(253,253,253)"></div>
<div class="a" style="left:1005px;top:506px;width:10px;height:10px;background:rgb(242,242,242)"></div>
<div class="a" style="left:1005px;top:516px;width:10px;height:10px;background:rgb(241,241,241)"></div>
<div class="a" style="left:1005px;top:526px;width:10px;height:6px;background:rgb(253,253,253)"></div>
<div class="a" style="left:1015px;top:500px;width:10px;height:6px;background:rgb(253,253,253)"></div>
<div class="a" style="left:1015px;top:506px;width:10px;height:10px;background:rgb(234,234,234)"></div>
<div class="a" style="left:1015px;top:516px;width:10px;height:10px;background:rgb(234,234,234)"></div>
<div class="a" style="left:1015px;top:526px;width:10px;height:6px;background:rgb(250,250,250)"></div>
<div class="a" style="left:1025px;top:500px;width:3px;height:6px;background:rgb(253,253,253)"></div>
<div class="a" style="left:1025px;top:506px;width:3px;height:10px;background:rgb(238,238,238)"></div>
<div class="a" style="left:1025px;top:516px;width:3px;height:10px;background:rgb(234,234,234)"></div>
<div class="a" style="left:1025px;top:526px;width:3px;height:6px;background:rgb(250,250,250)"></div>
<div class="caret" style="left:470px;top:562px"></div>
<div class="mono" style="left:494px;top:559px">November 8th 2016, 18:09:12.551</div>
<div class="mono" style="left:727px;top:559px">10.1</div>
<div class="mono" style="left:797px;top:559px">69</div>
<div class="mono" style="left:848px;top:559px">59,154</div>
<div class="mono" style="left:954px;top:559px">164</div>
<div class="mono" style="left:1024px;top:559px">100</div>
<div class="mono" style="left:1075px;top:559px">443</div>
<div class="mono" style="left:1190px;top:559px">qingxp9-
pc</div>
<div class="badge" style="left:1275px;top:557px"></div>
<div class="mono" style="left:1276px;top:559px;color:#111">alert</div>
<div class="mono" style="left:1400px;top:559px">SURICATA TLS invalid record/traffic</div>
<div class="a" style="left:756px;top:551px;width:8px;height:6px;background:rgb(251,251,251)"></div>
<div class="a" style="left:756px;top:557px;width:8px;height:10px;background:rgb(229,229,229)"></div>
<div class="a" style="left:756px;top:567px;width:8px;height:10px;background:rgb(231,231,231)"></div>
<div class="a" style="left:756px;top:577px;width:8px;height:6px;background:rgb(253,253,253)"></div>
<div class="a" style="left:764px;top:551px;width:10px;height:6px;background:rgb(251,251,251)"></div>
<div class="a" style="left:764px;top:557px;width:10px;height:10px;background:rgb(229,229,229)"></div>
<div class="a" style="left:764px;top:567px;width:10px;height:10px;background:rgb(233,233,233)"></div>
<div class="a" style="left:764px;top:577px;width:10px;height:6px;background:rgb(250,250,250)"></div>
<div class="a" style="left:774px;top:551px;width:10px;height:6px;background:rgb(250,250,250)"></div>
<div class="a" style="left:774px;top:557px;width:10px;height:10px;background:rgb(228,228,228)"></div>
<div class="a" style="left:774px;top:567px;width:10px;height:10px;background:rgb(237,237,237)"></div>
<div class="a" style="left:774px;top:577px;width:10px;height:6px;background:rgb(251,251,251)"></div>
<div class="a" style="left:784px;top:551px;width:13px;height:6px;background:rgb(250,250,250)"></div>
<div class="a" style="left:784px;top:557px;width:13px;height:10px;background:rgb(233,233,233)"></div>
<div class="a" style="left:784px;top:567px;width:13px;height:10px;background:rgb(237,237,237)"></div>
<div class="a" style="left:784px;top:577px;width:13px;height:6px;background:rgb(250,250,250)"></div>
<div class="a" style="left:972px;top:551px;width:3px;height:6px;background:rgb(250,250,250)"></div>
<div class="a" style="left:972px;top:557px;width:3px;height:10px;background:rgb(241,241,241)"></div>
<div class="a" style="left:972px;top:567px;width:3px;height:10px;background:rgb(231,231,231)"></div>
<div class="a" style="left:972px;top:577px;width:3px;height:6px;background:rgb(253,253,253)"></div>
<div class="a" style="left:975px;top:551px;width:10px;height:6px;background:rgb(251,251,251)"></div>
<div class="a" style="left:975px;top:557px;width:10px;height:10px;background:rgb(238,238,238)"></div>
<div class="a" style="left:975px;top:567px;width:10px;height:10px;background:rgb(232,232,232)"></div>
<div class="a" style="left:975px;top:577px;width:10px;height:6px;background:rgb(252,252,252)"></div>
<div class="a" style="left:985px;top:551px;width:10px;height:6px;background:rgb(252,252,252)"></div>
<div class="a" style="left:985px;top:557px;width:10px;height:10px;background:rgb(235,235,235)"></div>
<div class="a" style="left:985px;top:567px;width:10px;height:10px;background:rgb(229,229,229)"></div>
<div class="a" style="left:985px;top:577px;width:10px;height:6px;background:rgb(250,250,250)"></div>
<div class="a" style="left:995px;top:551px;width:10px;height:6px;background:rgb(253,253,253)"></div>
<div class="a" style="left:995px;top:557px;width:10px;height:10px;background:rgb(235,235,235)"></div>
<div class="a" style="left:995px;top:567px;width:10px;height:10px;background:rgb(235,235,235)"></div>
<div class="a" style="left:995px;top:577px;width:10px;height:6px;background:rgb(253,253,253)"></div>
<div class="a" style="left:1005px;top:551px;width:10px;height:6px;background:rgb(252,252,252)"></div>
<div class="a" style="left:1005px;top:557px;width:10px;height:10px;background:rgb(229,229,229)"></div>
<div class="a" style="left:1005px;top:567px;width:10px;height:10px;background:rgb(230,230,230)"></div>
<div class="a" style="left:1005px;top:577px;width:10px;height:6px;background:rgb(250,250,250)"></div>
<div class="a" style="left:1015px;top:551px;width:10px;height:6px;background:rgb(252,252,252)"></div>
<div class="a" style="left:1015px;top:557px;width:10px;height:10px;background:rgb(239,239,239)"></div>
<div class="a" style="left:1015px;top:567px;width:10px;height:10px;background:rgb(232,232,232)"></div>
<div class="a" style="left:1015px;top:577px;width:10px;height:6px;background:rgb(253,253,253)"></div>
<div class="a" style="left:1025px;top:551px;width:3px;height:6px;background:rgb(251,251,251)"></div>
<div class="a" style="left:1025px;top:557px;width:3px;height:10px;background:rgb(236,236,236)"></div>
<div class="a" style="left:1025px;top:567px;width:3px;height:10px;background:rgb(228,228,228)"></div>
<div class="a" style="left:1025px;top:577px;width:3px;height:6px;background:rgb(251,251,251)"></div>
<div class="caret" style="left:470px;top:613px"></div>
<div class="mono" style="left:494px;top:610px">November 8th 2016, 18:09:12.551</div>
<div class="mono" style="left:727px;top:610px">10.1</div>
<div class="mono" style="left:797px;top:610px">69</div>
<div class="mono" style="left:848px;top:610px">59,154</div>
<div class="mono" style="left:954px;top:610px">164</div>
<div class="mono" style="left:1024px;top:610px">100</div>
<div class="mono" style="left:1075px;top:610px">443</div>
<div class="mono" style="left:1190px;top:610px">qingxp9-
pc</div>
<div class="badge" style="left:1275px;top:608px"></div>
<div class="mono" style="left:1276px;top:610px;color:#111">alert</div>
<div class="mono" style="left:1400px;top:610px">SURICATA TLS invalid record version</div>
<div class="a" style="left:756px;top:602px;width:8px;height:6px;background:rgb(252,252,252)"></div>
<div class="a" style="left:756px;top:608px;width:8px;height:10px;background:rgb(230,230,230)"></div>
<div class="a" style="left:756px;top:618px;width:8px;height:10px;background:rgb(239,239,239)"></div>
<div class="a" style="left:756px;top:628px;width:8px;height:6px;background:rgb(250,250,250)"></div>
<div class="a" style="left:764px;top:602px;width:10px;height:6px;background:rgb(252,252,252)"></div>
<div class="a" style="left:764px;top:608px;width:10px;height:10px;background:rgb(238,238,238)"></div>
<div class="a" style="left:764px;top:618px;width:10px;height:10px;background:rgb(241,241,241)"></div>
<div class="a" style="left:764px;top:628px;width:10px;height:6px;background:rgb(250,250,250)"></div>
<div class="a" style="left:774px;top:602px;width:10px;height:6px;background:rgb(252,252,252)"></div>
<div class="a" style="left:774px;top:608px;width:10px;height:10px;background:rgb(236,236,236)"></div>
<div class="a" style="left:774px;top:618px;width:10px;height:10px;background:rgb(233,233,233)"></div>
<div class="a" style="left:774px;top:628px;width:10px;height:6px;background:rgb(251,251,251)"></div>
<div class="a" style="left:784px;top:602px;width:13px;height:6px;background:rgb(252,252,252)"></div>
<div class="a" style="left:784px;top:608px;width:13px;height:10px;background:rgb(240,240,240)"></div>
<div class="a" style="left:784px;top:618px;width:13px;height:10px;background:rgb(231,231,231)"></div>
<div class="a" style="left:784px;top:628px;width:13px;height:6px;background:rgb(252,252,252)"></div>
<div class="a" style="left:972px;top:602px;width:3px;height:6px;background:rgb(251,251,251)"></div>
<div class="a" style="left:972px;top:608px;width:3px;height:10px;background:rgb(237,237,237)"></div>
<div class="a" style="left:972px;top:618px;width:3px;height:10px;background:rgb(240,240,240)"></div>
<div class="a" style="left:972px;top:628px;width:3px;height:6px;background:rgb(251,251,251)"></div>
<div class="a" style="left:975px;top:602px;width:10px;height:6px;background:rgb(251,251,251)"></div>
<div class="a" style="left:975px;top:608px;width:10px;height:10px;background:rgb(241,241,241)"></div>
<div class="a" style="left:975px;top:618px;width:10px;height:10px;background:rgb(234,234,234)"></div>
<div class="a" style="left:975px;top:628px;width:10px;height:6px;background:rgb(251,251,251)"></div>
<div class="a" style="left:985px;top:602px;width:10px;height:6px;background:rgb(251,251,251)"></div>
<div class="a" style="left:985px;top:608px;width:10px;height:10px;background:rgb(236,236,236)"></div>
<div class="a" style="left:985px;top:618px;width:10px;height:10px;background:rgb(235,235,235)"></div>
<div class="a" style="left:985px;top:628px;width:10px;height:6px;background:rgb(252,252,252)"></div>
<div class="a" style="left:995px;top:602px;width:10px;height:6px;background:rgb(250,250,250)"></div>
<div class="a" style="left:995px;top:608px;width:10px;height:10px;background:rgb(228,228,228)"></div>
<div class="a" style="left:995px;top:618px;width:10px;height:10px;background:rgb(240,240,240)"></div>
<div class="a" style="left:995px;top:628px;width:10px;height:6px;background:rgb(252,252,252)"></div>
<div class="a" style="left:1005px;top:602px;width:10px;height:6px;background:rgb(253,253,253)"></div>
<div class="a" style="left:1005px;top:608px;width:10px;height:10px;background:rgb(232,232,232)"></div>
<div class="a" style="left:1005px;top:618px;width:10px;height:10px;background:rgb(231,231,231)"></div>
<div class="a" style="left:1005px;top:628px;width:10px;height:6px;background:rgb(252,252,252)"></div>
<div class="a" style="left:1015px;top:602px;width:10px;height:6px;background:rgb(253,253,253)"></div>
<div class="a" style="left:1015px;top:608px;width:10px;height:10px;background:rgb(240,240,240)"></div>
<div class="a" style="left:1015px;top:618px;width:10px;height:10px;background:rgb(242,242,242)"></div>
<div class="a" style="left:1015px;top:628px;width:10px;height:6px;background:rgb(252,252,252)"></div>
<div class="a" style="left:1025px;top:602px;width:3px;height:6px;background:rgb(252,252,252)"></div>
<div class="a" style="left:1025px;top:608px;width:3px;height:10px;background:rgb(229,229,229)"></div>
<div class="a" style="left:1025px;top:618px;width:3px;height:10px;background:rgb(231,231,231)"></div>
<div class="a" style="left:1025px;top:628px;width:3px;height:6px;background:rgb(250,250,250)"></div>
<div class="caret" style="left:470px;top:664px"></div>
<div class="mono" style="left:494px;top:661px">November 8th 2016, 18:09:12.551</div>
<div class="mono" style="left:727px;top:661px">164.</div>
<div class="mono" style="left:797px;top:661px">100</div>
<div class="mono" style="left:848px;top:661px">443</div>
<div class="mono" style="left:954px;top:661px">10.</div>
<div class="mono" style="left:1024px;top:661px">59</div>
<div class="mono" style="left:1075px;top:661px">59,154</div>
<div class="mono" style="left:1190px;top:661px">qingxp9-
pc</div>
<div class="badge" style="left:1275px;top:659px"></div>
<div class="mono" style="left:1276px;top:661px;color:#111">alert</div>
<div class="mono" style="left:1400px;top:661px">SURICATA TLS invalid record/traffic</div>
<div class="a" style="left:756px;top:653px;width:8px;height:6px;background:rgb(251,251,251)"></div>
<div class="a" style="left:756px;top:659px;width:8px;height:10px;background:rgb(235,235,235)"></div>
<div class="a" style="left:756px;top:669px;width:8px;height:10px;background:rgb(231,231,231)"></div>
<div class="a" style="left:756px;top:679px;width:8px;height:6px;background:rgb(252,252,252)"></div>
<div class="a" style="left:764px;top:653px;width:10px;height:6px;background:rgb(251,251,251)"></div>
<div class="a" style="left:764px;top:659px;width:10px;height:10px;background:rgb(235,235,235)"></div>
<div class="a" style="left:764px;top:669px;width:10px;height:10px;background:rgb(237,237,237)"></div>
<div class="a" style="left:764px;top:679px;width:10px;height:6px;background:rgb(250,250,250)"></div>
<div class="a" style="left:774px;top:653px;width:10px;height:6px;background:rgb(253,253,253)"></div>
<div class="a" style="left:774px;top:659px;width:10px;height:10px;background:rgb(242,242,242)"></div>
<div class="a" style="left:774px;top:669px;width:10px;height:10px;background:rgb(238,238,238)"></div>
<div class="a" style="left:774px;top:679px;width:10px;height:6px;background:rgb(252,252,252)"></div>
<div class="a" style="left:784px;top:653px;width:13px;height:6px;background:rgb(250,250,250)"></div>
<div class="a" style="left:784px;top:659px;width:13px;height:10px;background:rgb(241,241,241)"></div>
<div class="a" style="left:784px;top:669px;width:13px;height:10px;background:rgb(238,238,238)"></div>
<div class="a" style="left:784px;top:679px;width:13px;height:6px;background:rgb(250,250,250)"></div>
<div class="a" style="left:972px;top:653px;width:3px;height:6px;background:rgb(253,253,253)"></div>
<div class="a" style="left:972px;top:659px;width:3px;height:10px;background:rgb(240,240,240)"></div>
<div class="a" style="left:972px;top:669px;width:3px;height:10px;background:rgb(239,239,239)"></div>
<div class="a" style="left:972px;top:679px;width:3px;height:6px;background:rgb(251,251,251)"></div>
<div class="a" style="left:975px;top:653px;width:10px;height:6px;background:rgb(253,253,253)"></div>
<div class="a" style="left:975px;top:659px;width:10px;height:10px;background:rgb(242,242,242)"></div>
<div class="a" style="left:975px;top:669px;width:10px;height:10px;background:rgb(230,230,230)"></div>
<div class="a" style="left:975px;top:679px;width:10px;height:6px;background:rgb(253,253,253)"></div>
<div class="a" style="left:985px;top:653px;width:10px;height:6px;background:rgb(252,252,252)"></div>
<div class="a" style="left:985px;top:659px;width:10px;height:10px;background:rgb(229,229,229)"></div>
<div class="a" style="left:985px;top:669px;width:10px;height:10px;background:rgb(240,240,240)"></div>
<div class="a" style="left:985px;top:679px;width:10px;height:6px;background:rgb(253,253,253)"></div>
<div class="a" style="left:995px;top:653px;width:10px;height:6px;background:rgb(253,253,253)"></div>
<div class="a" style="left:995px;top:659px;width:10px;height:10px;background:rgb(234,234,234)"></div>
<div class="a" style="left:995px;top:669px;width:10px;height:10px;background:rgb(239,239,239)"></div>
<div class="a" style="left:995px;top:679px;width:10px;height:6px;background:rgb(250,250,250)"></div>
<div class="a" style="left:1005px;top:653px;width:10px;height:6px;background:rgb(251,251,251)"></div>
<div class="a" style="left:1005px;top:659px;width:10px;height:10px;background:rgb(230,230,230)"></div>
<div class="a" style="left:1005px;top:669px;width:10px;height:10px;background:rgb(230,230,230)"></div>
<div class="a" style="left:1005px;top:679px;width:10px;height:6px;background:rgb(250,250,250)"></div>
<div class="a" style="left:1015px;top:653px;width:10px;height:6px;background:rgb(251,251,251)"></div>
<div class="a" style="left:1015px;top:659px;width:10px;height:10px;background:rgb(237,237,237)"></div>
<div class="a" style="left:1015px;top:669px;width:10px;height:10px;background:rgb(242,242,242)"></div>
<div class="a" style="left:1015px;top:679px;width:10px;height:6px;background:rgb(253,253,253)"></div>
<div class="a" style="left:1025px;top:653px;width:3px;height:6px;background:rgb(251,251,251)"></div>
<div class="a" style="left:1025px;top:659px;width:3px;height:10px;background:rgb(237,237,237)"></div>
<div class="a" style="left:1025px;top:669px;width:3px;height:10px;background:rgb(241,241,241)"></div>
<div class="a" style="left:1025px;top:679px;width:3px;height:6px;background:rgb(253,253,253)"></div>
<div class="caret" style="left:470px;top:715px"></div>
<div class="mono" style="left:494px;top:712px">November 8th 2016, 18:09:12.551</div>
<div class="mono" style="left:727px;top:712px">164.</div>
<div class="mono" style="left:797px;top:712px">100</div>
<div class="mono" style="left:848px;top:712px">443</div>
<div class="mono" style="left:954px;top:712px">10.</div>
<div class="mono" style="left:1024px;top:712px">59</div>
<div class="mono" style="left:1075px;top:712px">59,154</div>
<div class="mono" style="left:1190px;top:712px">qingxp9-
pc</div>
<div class="badge" style="left:1275px;top:710px"></div>
<div class="mono" style="left:1276px;top:712px;color:#111">alert</div>
<div class="mono" style="left:1400px;top:712px">SURICATA TLS invalid record version</div>
<div class="a" style="left:756px;top:704px;width:8px;height:6px;background:rgb(252,252,252)"></div>
<div class="a" style="left:756px;top:710px;width:8px;height:10px;background:rgb(230,230,230)"></div>
<div class="a" style="left:756px;top:720px;width:8px;height:10px;background:rgb(236,236,236)"></div>
<div class="a" style="left:756px;top:730px;width:8px;height:6px;background:rgb(251,251,251)"></div>
<div class="a" style="left:764px;top:704px;width:10px;height:6px;background:rgb(250,250,250)"></div>
<div class="a" style="left:764px;top:710px;width:10px;height:10px;background:rgb(228,228,228)"></div>
<div class="a" style="left:764px;top:720px;width:10px;height:10px;background:rgb(240,240,240)"></div>
<div class="a" style="left:764px;top:730px;width:10px;height:6px;background:rgb(250,250,250)"></div>
<div class="a" style="left:774px;top:704px;width:10px;height:6px;background:rgb(251,251,251)"></div>
<div class="a" style="left:774px;top:710px;width:10px;height:10px;background:rgb(234,234,234)"></div>
<div class="a" style="left:774px;top:720px;width:10px;height:10px;background:rgb(241,241,241)"></div>
<div class="a" style="left:774px;top:730px;width:10px;height:6px;background:rgb(251,251,251)"></div>
<div class="a" style="left:784px;top:704px;width:13px;height:6px;background:rgb(251,251,251)"></div>
<div class="a" style="left:784px;top:710px;width:13px;height:10px;background:rgb(228,228,228)"></div>
<div class="a" style="left:784px;top:720px;width:13px;height:10px;background:rgb(232,232,232)"></div>
<div class="a" style="left:784px;top:730px;width:13px;height:6px;background:rgb(251,251,251)"></div>
<div class="a" style="left:972px;top:704px;width:3px;height:6px;background:rgb(252,252,252)"></div>
<div class="a" style="left:972px;top:710px;width:3px;height:10px;background:rgb(236,236,236)"></div>
<div class="a" style="left:972px;top:720px;width:3px;height:10px;background:rgb(231,231,231)"></div>
<div class="a" style="left:972px;top:730px;width:3px;height:6px;background:rgb(252,252,252)"></div>
<div class="a" style="left:975px;top:704px;width:10px;height:6px;background:rgb(252,252,252)"></div>
<div class="a" style="left:975px;top:710px;width:10px;height:10px;background:rgb(236,236,236)"></div>
<div class="a" style="left:975px;top:720px;width:10px;height:10px;background:rgb(234,234,234)"></div>
<div class="a" style="left:975px;top:730px;width:10px;height:6px;background:rgb(251,251,251)"></div>
<div class="a" style="left:985px;top:704px;width:10px;height:6px;background:rgb(250,250,250)"></div>
<div class="a" style="left:985px;top:710px;width:10px;height:10px;background:rgb(242,242,242)"></div>
<div class="a" style="left:985px;top:720px;width:10px;height:10px;background:rgb(239,239,239)"></div>
<div class="a" style="left:985px;top:730px;width:10px;height:6px;background:rgb(252,252,252)"></div>
<div class="a" style="left:995px;top:704px;width:10px;height:6px;background:rgb(253,253,253)"></div>
<div class="a" style="left:995px;top:710px;width:10px;height:10px;background:rgb(238,238,238)"></div>
<div class="a" style="left:995px;top:720px;width:10px;height:10px;background:rgb(237,237,237)"></div>
<div class="a" style="left:995px;top:730px;width:10px;height:6px;background:rgb(253,253,253)"></div>
<div class="a" style="left:1005px;top:704px;width:10px;height:6px;background:rgb(251,251,251)"></div>
<div class="a" style="left:1005px;top:710px;width:10px;height:10px;background:rgb(236,236,236)"></div>
<div class="a" style="left:1005px;top:720px;width:10px;height:10px;background:rgb(230,230,230)"></div>
<div class="a" style="left:1005px;top:730px;width:10px;height:6px;background:rgb(250,250,250)"></div>
<div class="a" style="left:1015px;top:704px;width:10px;height:6px;background:rgb(253,253,253)"></div>
<div class="a" style="left:1015px;top:710px;width:10px;height:10px;background:rgb(240,240,240)"></div>
<div class="a" style="left:1015px;top:720px;width:10px;height:10px;background:rgb(230,230,230)"></div>
<div class="a" style="left:1015px;top:730px;width:10px;height:6px;background:rgb(250,250,250)"></div>
<div class="a" style="left:1025px;top:704px;width:3px;height:6px;background:rgb(251,251,251)"></div>
<div class="a" style="left:1025px;top:710px;width:3px;height:10px;background:rgb(230,230,230)"></div>
<div class="a" style="left:1025px;top:720px;width:3px;height:10px;background:rgb(230,230,230)"></div>
<div class="a" style="left:1025px;top:730px;width:3px;height:6px;background:rgb(253,253,253)"></div>
<div class="caret" style="left:470px;top:766px"></div>
<div class="mono" style="left:494px;top:763px">November 8th 2016, 18:07:37.678</div>
<div class="mono" style="left:727px;top:763px">216.</div>
<div class="mono" style="left:797px;top:763px">.47</div>
<div class="mono" style="left:848px;top:763px">443</div>
<div class="mono" style="left:954px;top:763px">10.</div>
<div class="mono" style="left:1024px;top:763px">59</div>
<div class="mono" style="left:1075px;top:763px">57,268</div>
<div class="mono" style="left:1190px;top:763px">qingxp9-
pc</div>
<div class="badge" style="left:1275px;top:761px"></div>
<div class="mono" style="left:1276px;top:763px;color:#111">alert</div>
<div class="mono" style="left:1400px;top:763px">ET POLICY SSLv3 outbound connection from client vulnerable to POODLE
attack</div>
<div class="a" style="left:756px;top:755px;width:8px;height:6px;background:rgb(250,250,250)"></div>
<div class="a" style="left:756px;top:761px;width:8px;height:10px;background:rgb(236,236,236)"></div>
<div class="a" style="left:756px;top:771px;width:8px;height:10px;background:rgb(228,228,228)"></div>
<div class="a" style="left:756px;top:781px;width:8px;height:6px;background:rgb(252,252,252)"></div>
<div class="a" style="left:764px;top:755px;width:10px;height:6px;background:rgb(253,253,253)"></div>
<div class="a" style="left:764px;top:761px;width:10px;height:10px;background:rgb(240,240,240)"></div>
<div class="a" style="left:764px;top:771px;width:10px;height:10px;background:rgb(240,240,240)"></div>
<div class="a" style="left:764px;top:781px;width:10px;height:6px;background:rgb(250,250,250)"></div>
<div class="a" style="left:774px;top:755px;width:10px;height:6px;background:rgb(250,250,250)"></div>
<div class="a" style="left:774px;top:761px;width:10px;height:10px;background:rgb(231,231,231)"></div>
<div class="a" style="left:774px;top:771px;width:10px;height:10px;background:rgb(231,231,231)"></div>
<div class="a" style="left:774px;top:781px;width:10px;height:6px;background:rgb(252,252,252)"></div>
<div class="a" style="left:784px;top:755px;width:13px;height:6px;background:rgb(250,250,250)"></div>
<div class="a" style="left:784px;top:761px;width:13px;height:10px;background:rgb(240,240,240)"></div>
<div class="a" style="left:784px;top:771px;width:13px;height:10px;background:rgb(229,229,229)"></div>
<div class="a" style="left:784px;top:781px;width:13px;height:6px;background:rgb(253,253,253)"></div>
<div class="a" style="left:972px;top:755px;width:3px;height:6px;background:rgb(250,250,250)"></div>
<div class="a" style="left:972px;top:761px;width:3px;height:10px;background:rgb(240,240,240)"></div>
<div class="a" style="left:972px;top:771px;width:3px;height:10px;background:rgb(242,242,242)"></div>
<div class="a" style="left:972px;top:781px;width:3px;height:6px;background:rgb(250,250,250)"></div>
<div class="a" style="left:975px;top:755px;width:10px;height:6px;background:rgb(253,253,253)"></div>
<div class="a" style="left:975px;top:761px;width:10px;height:10px;background:rgb(233,233,233)"></div>
<div class="a" style="left:975px;top:771px;width:10px;height:10px;background:rgb(237,237,237)"></div>
<div class="a" style="left:975px;top:781px;width:10px;height:6px;background:rgb(251,251,251)"></div>
<div class="a" style="left:985px;top:755px;width:10px;height:6px;background:rgb(252,252,252)"></div>
<div class="a" style="left:985px;top:761px;width:10px;height:10px;background:rgb(235,235,235)"></div>
<div class="a" style="left:985px;top:771px;width:10px;height:10px;background:rgb(236,236,236)"></div>
<div class="a" style="left:985px;top:781px;width:10px;height:6px;background:rgb(253,253,253)"></div>
<div class="a" style="left:995px;top:755px;width:10px;height:6px;background:rgb(251,251,251)"></div>
<div class="a" style="left:995px;top:761px;width:10px;height:10px;background:rgb(239,239,239)"></div>
<div class="a" style="left:995px;top:771px;width:10px;height:10px;background:rgb(236,236,236)"></div>
<div class="a" style="left:995px;top:781px;width:10px;height:6px;background:rgb(252,252,252)"></div>
<div class="a" style="left:1005px;top:755px;width:10px;height:6px;background:rgb(251,251,251)"></div>
<div class="a" style="left:1005px;top:761px;width:10px;height:10px;background:rgb(241,241,241)"></div>
<div class="a" style="left:1005px;top:771px;width:10px;height:10px;background:rgb(235,235,235)"></div>
<div class="a" style="left:1005px;top:781px;width:10px;height:6px;background:rgb(251,251,251)"></div>
<div class="a" style="left:1015px;top:755px;width:10px;height:6px;background:rgb(253,253,253)"></div>
<div class="a" style="left:1015px;top:761px;width:10px;height:10px;background:rgb(229,229,229)"></div>
<div class="a" style="left:1015px;top:771px;width:10px;height:10px;background:rgb(234,234,234)"></div>
<div class="a" style="left:1015px;top:781px;width:10px;height:6px;background:rgb(253,253,253)"></div>
<div class="a" style="left:1025px;top:755px;width:3px;height:6px;background:rgb(252,252,252)"></div>
<div class="a" style="left:1025px;top:761px;width:3px;height:10px;background:rgb(229,229,229)"></div>
<div class="a" style="left:1025px;top:771px;width:3px;height:10px;background:rgb(238,238,238)"></div>
<div class="a" style="left:1025px;top:781px;width:3px;height:6px;background:rgb(251,251,251)"></div>
<div class="caret" style="left:470px;top:821px"></div>
<div class="mono" style="left:494px;top:818px">November 8th 2016, 18:02:15.970</div>
<div class="mono" style="left:727px;top:818px">83.1</div>
<div class="mono" style="left:797px;top:818px">.67</div>
<div class="mono" style="left:848px;top:818px">443</div>
<div class="mono" style="left:954px;top:818px">10.</div>
<div class="mono" style="left:1024px;top:818px">59</div>
<div class="mono" style="left:1075px;top:818px">59,474</div>
<div class="mono" style="left:1190px;top:818px">qingxp9-
pc</div>
<div class="badge" style="left:1275px;top:816px"></div>
<div class="mono" style="left:1276px;top:818px;color:#111">alert</div>
<div class="mono" style="left:1400px;top:818px">SURICATA TLS invalid record/traffic</div>
<div class="a" style="left:756px;top:810px;width:8px;height:6px;background:rgb(253,253,253)"></div>
<div class="a" style="left:756px;top:816px;width:8px;height:10px;background:rgb(229,229,229)"></div>
<div class="a" style="left:756px;top:826px;width:8px;height:10px;background:rgb(231,231,231)"></div>
<div class="a" style="left:756px;top:836px;width:8px;height:6px;background:rgb(252,252,252)"></div>
<div class="a" style="left:764px;top:810px;width:10px;height:6px;background:rgb(250,250,250)"></div>
<div class="a" style="left:764px;top:816px;width:10px;height:10px;background:rgb(242,242,242)"></div>
<div class="a" style="left:764px;top:826px;width:10px;height:10px;background:rgb(240,240,240)"></div>
<div class="a" style="left:764px;top:836px;width:10px;height:6px;background:rgb(251,251,251)"></div>
<div class="a" style="left:774px;top:810px;width:10px;height:6px;background:rgb(252,252,252)"></div>
<div class="a" style="left:774px;top:816px;width:10px;height:10px;background:rgb(230,230,230)"></div>
<div class="a" style="left:774px;top:826px;width:10px;height:10px;background:rgb(232,232,232)"></div>
<div class="a" style="left:774px;top:836px;width:10px;height:6px;background:rgb(251,251,251)"></div>
<div class="a" style="left:784px;top:810px;width:13px;height:6px;background:rgb(253,253,253)"></div>
<div class="a" style="left:784px;top:816px;width:13px;height:10px;background:rgb(231,231,231)"></div>
<div class="a" style="left:784px;top:826px;width:13px;height:10px;background:rgb(239,239,239)"></div>
<div class="a" style="left:784px;top:836px;width:13px;height:6px;background:rgb(250,250,250)"></div>
<div class="a" style="left:972px;top:810px;width:3px;height:6px;background:rgb(253,253,253)"></div>
<div class="a" style="left:972px;top:816px;width:3px;height:10px;background:rgb(242,242,242)"></div>
<div class="a" style="left:972px;top:826px;width:3px;height:10px;background:rgb(235,235,235)"></div>
<div class="a" style="left:972px;top:836px;width:3px;height:6px;background:rgb(251,251,251)"></div>
<div class="a" style="left:975px;top:810px;width:10px;height:6px;background:rgb(251,251,251)"></div>
<div class="a" style="left:975px;top:816px;width:10px;height:10px;background:rgb(230,230,230)"></div>
<div class="a" style="left:975px;top:826px;width:10px;height:10px;background:rgb(239,239,239)"></div>
<div class="a" style="left:975px;top:836px;width:10px;height:6px;background:rgb(253,253,253)"></div>
<div class="a" style="left:985px;top:810px;width:10px;height:6px;background:rgb(253,253,253)"></div>
<div class="a" style="left:985px;top:816px;width:10px;height:10px;background:rgb(233,233,233)"></div>
<div class="a" style="left:985px;top:826px;width:10px;height:10px;background:rgb(234,234,234)"></div>
<div class="a" style="left:985px;top:836px;width:10px;height:6px;background:rgb(251,251,251)"></div>
<div class="a" style="left:995px;top:810px;width:10px;height:6px;background:rgb(252,252,252)"></div>
<div class="a" style="left:995px;top:816px;width:10px;height:10px;background:rgb(233,233,233)"></div>
<div class="a" style="left:995px;top:826px;width:10px;height:10px;background:rgb(229,229,229)"></div>
<div class="a" style="left:995px;top:836px;width:10px;height:6px;background:rgb(252,252,252)"></div>
<div class="a" style="left:1005px;top:810px;width:10px;height:6px;background:rgb(250,250,250)"></div>
<div class="a" style="left:1005px;top:816px;width:10px;height:10px;background:rgb(233,233,233)"></div>
<div class="a" style="left:1005px;top:826px;width:10px;height:10px;background:rgb(236,236,236)"></div>
<div class="a" style="left:1005px;top:836px;width:10px;height:6px;background:rgb(253,253,253)"></div>
<div class="a" style="left:1015px;top:810px;width:10px;height:6px;background:rgb(253,253,253)"></div>
<div class="a" style="left:1015px;top:816px;width:10px;height:10px;background:rgb(239,239,239)"></div>
<div class="a" style="left:1015px;top:826px;width:10px;height:10px;background:rgb(228,228,228)"></div>
<div class="a" style="left:1015px;top:836px;width:10px;height:6px;background:rgb(253,253,253)"></div>
<div class="a" style="left:1025px;top:810px;width:3px;height:6px;background:rgb(252,252,252)"></div>
<div class="a" style="left:1025px;top:816px;width:3px;height:10px;background:rgb(236,236,236)"></div>
<div class="a" style="left:1025px;top:826px;width:3px;height:10px;background:rgb(237,237,237)"></div>
<div class="a" style="left:1025px;top:836px;width:3px;height:6px;background:rgb(252,252,252)"></div>
<div class="caret" style="left:470px;top:871px"></div>
<div class="mono" style="left:494px;top:868px">November 8th 2016, 18:02:15.970</div>
<div class="mono" style="left:727px;top:868px">10.1</div>
<div class="mono" style="left:797px;top:868px">69</div>
<div class="mono" style="left:848px;top:868px">59,474</div>
<div class="mono" style="left:954px;top:868px">83.</div>
<div class="mono" style="left:1024px;top:868px">.67</div>
<div class="mono" style="left:1075px;top:868px">443</div>
<div class="mono" style="left:1190px;top:868px">qingxp9-
pc</div>
<div class="badge" style="left:1275px;top:866px"></div>
<div class="mono" style="left:1276px;top:868px;color:#111">alert</div>
<div class="mono" style="left:1400px;top:868px">SURICATA TLS invalid record version</div>
<div class="a" style="left:756px;top:860px;width:8px;height:6px;background:rgb(250,250,250)"></div>
<div class="a" style="left:756px;top:866px;width:8px;height:10px;background:rgb(229,229,229)"></div>
<div class="a" style="left:756px;top:876px;width:8px;height:10px;background:rgb(242,242,242)"></div>
<div class="a" style="left:756px;top:886px;width:8px;height:6px;background:rgb(251,251,251)"></div>
<div class="a" style="left:764px;top:860px;width:10px;height:6px;background:rgb(250,250,250)"></div>
<div class="a" style="left:764px;top:866px;width:10px;height:10px;background:rgb(229,229,229)"></div>
<div class="a" style="left:764px;top:876px;width:10px;height:10px;background:rgb(232,232,232)"></div>
<div class="a" style="left:764px;top:886px;width:10px;height:6px;background:rgb(252,252,252)"></div>
<div class="a" style="left:774px;top:860px;width:10px;height:6px;background:rgb(250,250,250)"></div>
<div class="a" style="left:774px;top:866px;width:10px;height:10px;background:rgb(242,242,242)"></div>
<div class="a" style="left:774px;top:876px;width:10px;height:10px;background:rgb(240,240,240)"></div>
<div class="a" style="left:774px;top:886px;width:10px;height:6px;background:rgb(251,251,251)"></div>
<div class="a" style="left:784px;top:860px;width:13px;height:6px;background:rgb(252,252,252)"></div>
<div class="a" style="left:784px;top:866px;width:13px;height:10px;background:rgb(240,240,240)"></div>
<div class="a" style="left:784px;top:876px;width:13px;height:10px;background:rgb(230,230,230)"></div>
<div class="a" style="left:784px;top:886px;width:13px;height:6px;background:rgb(253,253,253)"></div>
<div class="a" style="left:972px;top:860px;width:3px;height:6px;background:rgb(252,252,252)"></div>
<div class="a" style="left:972px;top:866px;width:3px;height:10px;background:rgb(234,234,234)"></div>
<div class="a" style="left:972px;top:876px;width:3px;height:10px;background:rgb(230,230,230)"></div>
<div class="a" style="left:972px;top:886px;width:3px;height:6px;background:rgb(253,253,253)"></div>
<div class="a" style="left:975px;top:860px;width:10px;height:6px;background:rgb(252,252,252)"></div>
<div class="a" style="left:975px;top:866px;width:10px;height:10px;background:rgb(229,229,229)"></div>
<div class="a" style="left:975px;top:876px;width:10px;height:10px;background:rgb(232,232,232)"></div>
<div class="a" style="left:975px;top:886px;width:10px;height:6px;background:rgb(250,250,250)"></div>
<div class="a" style="left:985px;top:860px;width:10px;height:6px;background:rgb(251,251,251)"></div>
<div class="a" style="left:985px;top:866px;width:10px;height:10px;background:rgb(234,234,234)"></div>
<div class="a" style="left:985px;top:876px;width:10px;height:10px;background:rgb(242,242,242)"></div>
<div class="a" style="left:985px;top:886px;width:10px;height:6px;background:rgb(250,250,250)"></div>
<div class="a" style="left:995px;top:860px;width:10px;height:6px;background:rgb(252,252,252)"></div>
<div class="a" style="left:995px;top:866px;width:10px;height:10px;background:rgb(228,228,228)"></div>
<div class="a" style="left:995px;top:876px;width:10px;height:10px;background:rgb(238,238,238)"></div>
<div class="a" style="left:995px;top:886px;width:10px;height:6px;background:rgb(250,250,250)"></div>
<div class="a" style="left:1005px;top:860px;width:10px;height:6px;background:rgb(252,252,252)"></div>
<div class="a" style="left:1005px;top:866px;width:10px;height:10px;background:rgb(229,229,229)"></div>
<div class="a" style="left:1005px;top:876px;width:10px;height:10px;background:rgb(237,237,237)"></div>
<div class="a" style="left:1005px;top:886px;width:10px;height:6px;background:rgb(251,251,251)"></div>
<div class="a" style="left:1015px;top:860px;width:10px;height:6px;background:rgb(250,250,250)"></div>
<div class="a" style="left:1015px;top:866px;width:10px;height:10px;background:rgb(232,232,232)"></div>
<div class="a" style="left:1015px;top:876px;width:10px;height:10px;background:rgb(241,241,241)"></div>
<div class="a" style="left:1015px;top:886px;width:10px;height:6px;background:rgb(250,250,250)"></div>
<div class="a" style="left:1025px;top:860px;width:3px;height:6px;background:rgb(253,253,253)"></div>
<div class="a" style="left:1025px;top:866px;width:3px;height:10px;background:rgb(228,228,228)"></div>
<div class="a" style="left:1025px;top:876px;width:3px;height:10px;background:rgb(233,233,233)"></div>
<div class="a" style="left:1025px;top:886px;width:3px;height:6px;background:rgb(253,253,253)"></div>
<div class="a" style="left:764px;top:353px;width:10px;height:523px;background:rgba(250,150,175,0.5)"></div>
<div class="a" style="left:774px;top:353px;width:23px;height:10px;background:rgba(250,150,175,0.35)"></div>
<div class="a" style="left:985px;top:347px;width:10px;height:529px;background:rgba(250,150,175,0.5)"></div>
<div class="a" style="left:995px;top:347px;width:20px;height:6px;background:rgba(250,150,175,0.25)"></div>
<div class="a" style="left:1015px;top:347px;width:13px;height:529px;background:rgba(250,150,175,0.22)"></div>
<div id="scroll"></div>
<div class="a" style="left:1907px;top:15px;width:11px;height:365px;background:#c1c1c1"></div>
<div class="a" style="left:1908px;top:6px;width:0;height:0;border-left:4px solid transparent;border-right:4px solid transparent;border-bottom:4px solid #a3a3a3"></div>
<svg class="a" style="left:1749px;top:851px" width="44" height="15" viewBox="0 0 44 15"><g fill="none" stroke="#111" stroke-width="1.6" stroke-linecap="square"><path d="M7,0.5 V1.8 M1.5,4.5 V2.6 H12.5 V4.5 M6,4 L3.2,9 Q8,10.5 11.5,13.8 M10,7.8 Q8.5,12 1.5,13.8 M0.8,8.2 H13.2"/><path transform="translate(15,0)" d="M7,0.8 L0.8,6.5 M7,0.8 L13.2,6.5 M3.5,6.8 H10.5 M4,9.8 H10 M1.8,13.5 H12.2 M7,6.8 V13.5"/><path transform="translate(30,0)" d="M7,0.5 V1.8 M1.5,4.5 V2.6 H12.5 V4.5 M5.5,3.5 L3,6.5 M5,5 H10 L3.5,9 M6.5,6.2 L11.5,8.5 M4,10 V13.8 H10 V10 Z"/></g></svg>
<div class="a" style="left:1796px;top:850px;font-size:14px;line-height:16px;color:#111">(</div>
<div class="a" style="left:1805px;top:849px;font-size:14px;line-height:16px;font-weight:bold;color:#111;letter-spacing:-0.1px">bobao.360.cn</div>
<div class="a" style="left:1899px;top:850px;font-size:14px;line-height:16px;color:#111">)</div>
</body></html>
